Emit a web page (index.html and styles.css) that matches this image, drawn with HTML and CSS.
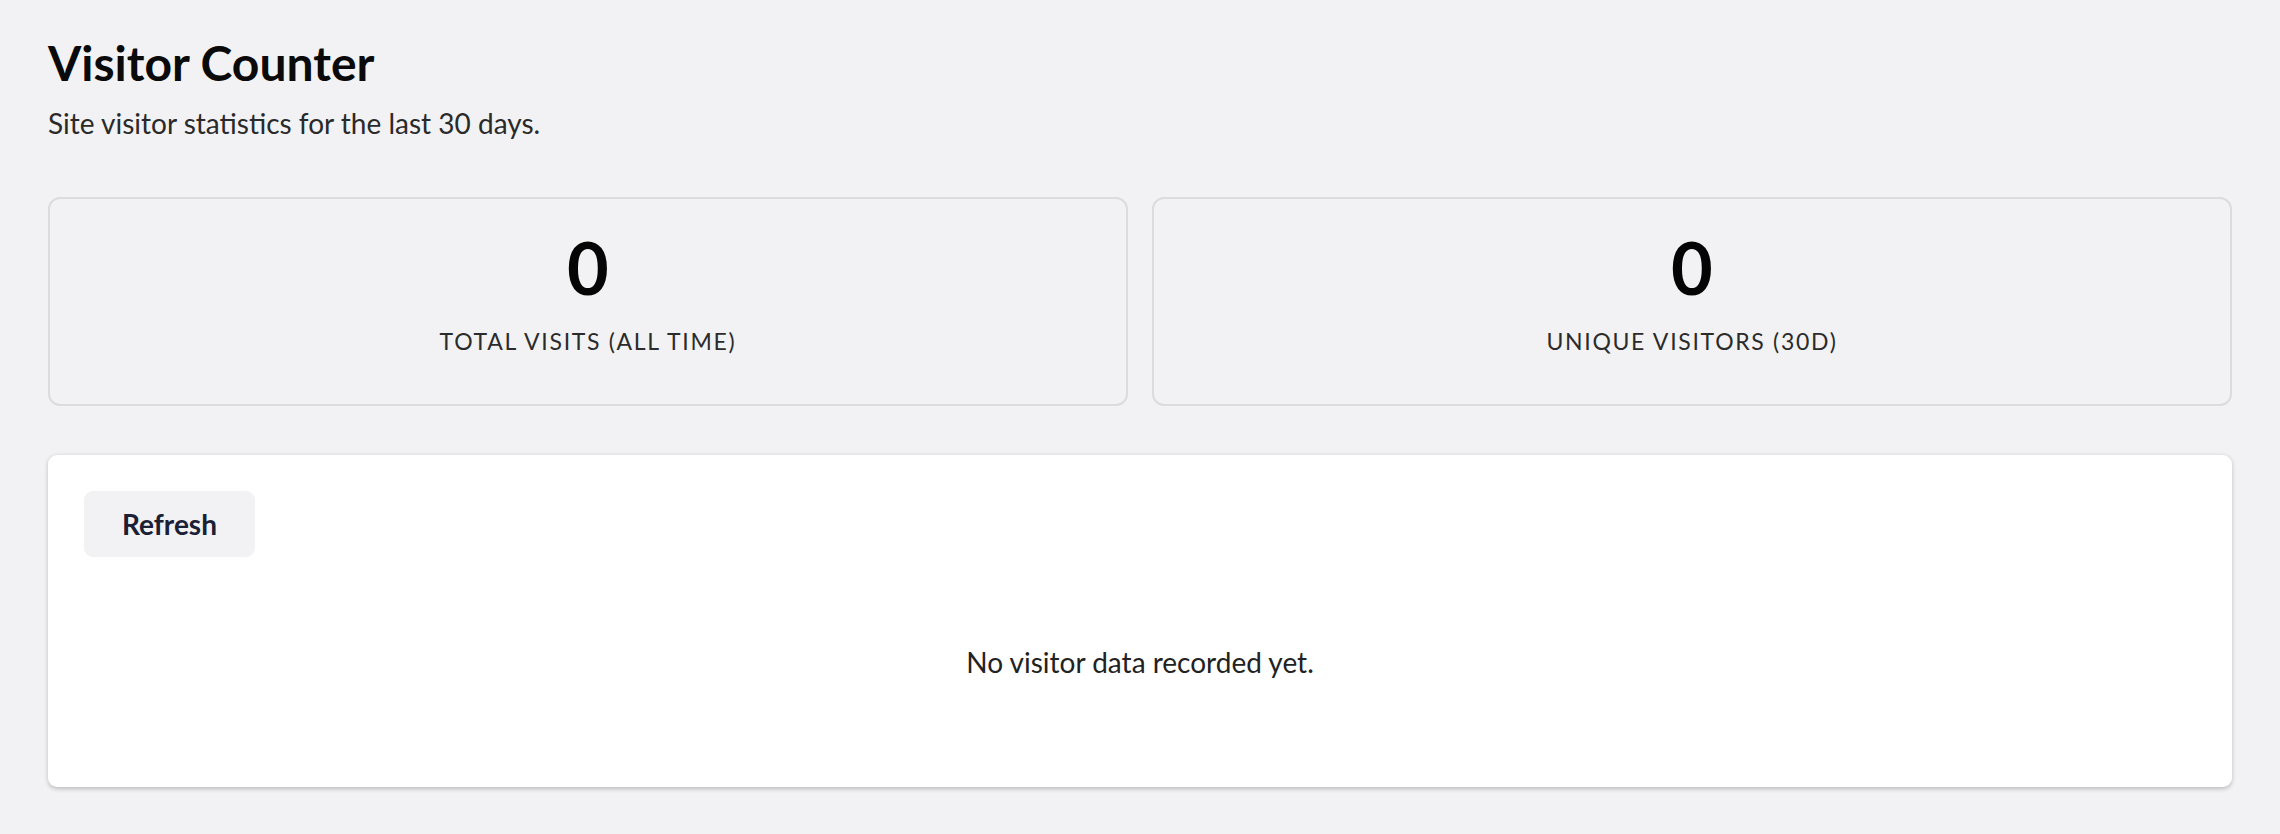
FILE: index.html
```html
<!DOCTYPE html>
<html lang="en">
<head>
<meta charset="utf-8">
<title>Visitor Counter</title>
<link rel="stylesheet" href="styles.css">
</head>
<body>
<main class="page">
  <header class="page-header">
    <h1 class="page-title">Visitor Counter</h1>
    <p class="page-subtitle">Site visitor statistics for the last 30 days.</p>
  </header>
  <section class="stats">
    <div class="stat-card">
      <div class="stat-value">0</div>
      <div class="stat-label">Total Visits (All Time)</div>
    </div>
    <div class="stat-card">
      <div class="stat-value">0</div>
      <div class="stat-label">Unique Visitors (30d)</div>
    </div>
  </section>
  <section class="panel">
    <div class="panel-actions">
      <button class="btn" type="button">Refresh</button>
    </div>
    <div class="empty-state">No visitor data recorded yet.</div>
  </section>
</main>
</body>
</html>
```
FILE: styles.css
```css
* { box-sizing: border-box; }
html, body { margin: 0; padding: 0; }
body {
  background: #f2f2f4;
  font-family: Lato, "Noto Sans", sans-serif;
  color: #1a1a1a;
}
.page {
  padding: 34px 48px 48px;
}
.page-header {
  margin-bottom: 53.5px;
}
.page-title {
  margin: 0;
  font-size: 48px;
  line-height: 1.2;
  font-weight: 700;
  color: #0a0a0a;
}
.page-subtitle {
  margin: 10px 0 0;
  font-size: 28px;
  line-height: 42px;
  color: #2a2a2a;
}
.stats {
  display: grid;
  grid-template-columns: 1fr 1fr;
  gap: 24px;
  margin-bottom: 49px;
}
.stat-card {
  border: 2px solid #dcdce0;
  border-radius: 12px;
  padding: 32px 24px 45.2px;
  text-align: center;
}
.stat-value {
  font-size: 72px;
  line-height: 1;
  font-weight: 700;
  color: #050505;
}
.stat-label {
  margin-top: 20.8px;
  font-size: 23px;
  line-height: 34.5px;
  text-transform: uppercase;
  letter-spacing: 1.7px;
  color: #2b2b2b;
}
.panel {
  background: #ffffff;
  border-radius: 9px;
  box-shadow: 0 1.5px 4.5px rgba(0, 0, 0, 0.22);
  padding: 36px;
}
.panel-actions {
  display: flex;
}
.btn {
  font-family: Lato, "Noto Sans", sans-serif;
  font-size: 28px;
  line-height: 42px;
  font-weight: 700;
  color: #1b2035;
  background: #f2f2f4;
  border: none;
  border-radius: 9px;
  padding: 12px 38px;
  cursor: pointer;
}
.empty-state {
  padding: 84px 0 68px;
  text-align: center;
  font-size: 28px;
  line-height: 42px;
  color: #222222;
}
```
